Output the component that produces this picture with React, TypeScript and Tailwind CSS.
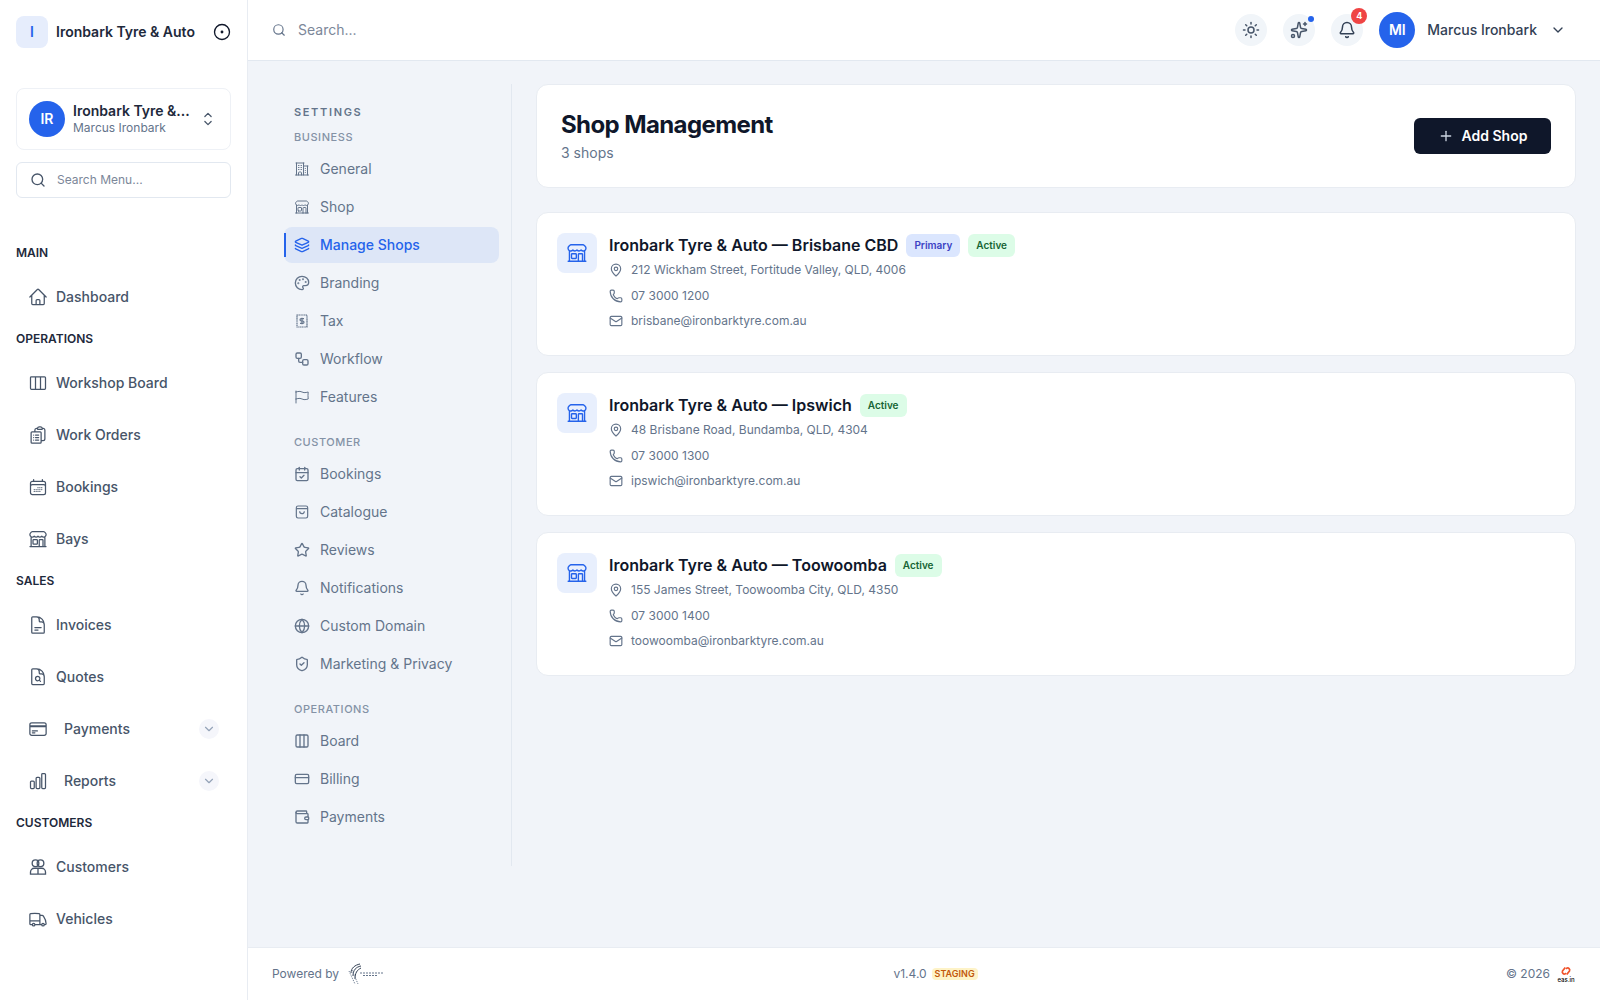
import type { ReactNode } from "react";
import {
  HiOutlineHome,
  HiOutlineViewColumns,
  HiOutlineClipboardDocumentList,
  HiOutlineCalendarDays,
  HiOutlineBuildingStorefront,
  HiOutlineDocumentText,
  HiOutlineDocumentMagnifyingGlass,
  HiOutlineCreditCard,
  HiOutlineChartBar,
  HiOutlineTruck,
  HiOutlineChevronUpDown,
  HiOutlineBuildingOffice2,
  HiOutlineFlag,
} from "react-icons/hi2";
import {
  Bell,
  CalendarCheck,
  ChevronDown,
  CircleDot,
  Columns3,
  CreditCard,
  Globe,
  Layers,
  Mail,
  MapPin,
  Palette,
  Phone,
  Plus,
  Search,
  ShieldCheck,
  Sparkles,
  Star,
  Sun,
  Wallet,
  Workflow,
} from "lucide-react";

const UsersIcon = ({ className }: { className?: string }) => (
  <svg viewBox="0 0 24 24" fill="none" stroke="currentColor" strokeWidth="1.6" className={className}>
    <circle cx="9" cy="7.5" r="4" />
    <circle cx="15" cy="7.5" r="4" />
    <path d="M3 20.5v-2.5a4.5 4.5 0 0 1 4.5-4.5h9a4.5 4.5 0 0 1 4.5 4.5v2.5z" />
    <path d="M12 14v6.5" />
  </svg>
);

const TaxIcon = ({ className }: { className?: string }) => (
  <svg viewBox="0 0 24 24" fill="none" stroke="currentColor" strokeWidth="1.8" className={className}>
    <rect x="4.5" y="3" width="15" height="18" strokeDasharray="2 0.6" />
    <path d="M15 8.5h-4.2a1.7 1.7 0 0 0 0 3.5h2.4a1.7 1.7 0 0 1 0 3.5H9M12 7v10" />
  </svg>
);

const BagIcon = ({ className }: { className?: string }) => (
  <svg viewBox="0 0 24 24" fill="none" stroke="currentColor" strokeWidth="1.8" className={className}>
    <rect x="3.5" y="3" width="17" height="18" rx="2.5" />
    <path d="M3.5 7h17M8.5 11a3.5 3.5 0 0 0 7 0" />
  </svg>
);

const mainNav = [
  {
    label: "MAIN",
    items: [{ name: "Dashboard", Icon: HiOutlineHome }],
  },
  {
    label: "OPERATIONS",
    items: [
      { name: "Workshop Board", Icon: HiOutlineViewColumns },
      { name: "Work Orders", Icon: HiOutlineClipboardDocumentList },
      { name: "Bookings", Icon: HiOutlineCalendarDays },
      { name: "Bays", Icon: HiOutlineBuildingStorefront },
    ],
  },
  {
    label: "SALES",
    items: [
      { name: "Invoices", Icon: HiOutlineDocumentText },
      { name: "Quotes", Icon: HiOutlineDocumentMagnifyingGlass },
      { name: "Payments", Icon: HiOutlineCreditCard, sub: true },
      { name: "Reports", Icon: HiOutlineChartBar, sub: true },
    ],
  },
  {
    label: "CUSTOMERS",
    items: [
      { name: "Customers", Icon: UsersIcon },
      { name: "Vehicles", Icon: HiOutlineTruck },
    ],
  },
];

const settingsNav = [
  {
    label: "BUSINESS",
    items: [
      { name: "General", Icon: HiOutlineBuildingOffice2 },
      { name: "Shop", Icon: HiOutlineBuildingStorefront },
      { name: "Manage Shops", Icon: Layers, active: true },
      { name: "Branding", Icon: Palette },
      { name: "Tax", Icon: TaxIcon },
      { name: "Workflow", Icon: Workflow },
      { name: "Features", Icon: HiOutlineFlag },
    ],
  },
  {
    label: "CUSTOMER",
    items: [
      { name: "Bookings", Icon: CalendarCheck },
      { name: "Catalogue", Icon: BagIcon },
      { name: "Reviews", Icon: Star },
      { name: "Notifications", Icon: Bell },
      { name: "Custom Domain", Icon: Globe },
      { name: "Marketing & Privacy", Icon: ShieldCheck },
    ],
  },
  {
    label: "OPERATIONS",
    items: [
      { name: "Board", Icon: Columns3 },
      { name: "Billing", Icon: CreditCard },
      { name: "Payments", Icon: Wallet },
    ],
  },
];

const shops = [
  {
    name: "Ironbark Tyre & Auto — Brisbane CBD",
    primary: true,
    address: "212 Wickham Street, Fortitude Valley, QLD, 4006",
    phone: "07 3000 1200",
    email: "brisbane@ironbarktyre.com.au",
  },
  {
    name: "Ironbark Tyre & Auto — Ipswich",
    address: "48 Brisbane Road, Bundamba, QLD, 4304",
    phone: "07 3000 1300",
    email: "ipswich@ironbarktyre.com.au",
  },
  {
    name: "Ironbark Tyre & Auto — Toowoomba",
    address: "155 James Street, Toowoomba City, QLD, 4350",
    phone: "07 3000 1400",
    email: "toowoomba@ironbarktyre.com.au",
  },
];

const Sidebar = () => (
  <aside className="w-[248px] shrink-0 h-full overflow-hidden bg-white border-r border-[#e8ecf2]">
    <div className="h-16 pl-4 pr-4 flex items-center">
      <div className="w-8 h-8 rounded-lg bg-[#e6edfc] flex items-center justify-center text-sm font-semibold text-[#2563eb]">
        I
      </div>
      <span className="ml-2 text-sm font-semibold text-[#1e293b] flex-1">Ironbark Tyre & Auto</span>
      <CircleDot className="w-[18px] h-[18px] text-[#0f172a]" strokeWidth={1.8} />
    </div>
    <div className="px-4 pt-6">
      <div className="h-[62px] rounded-lg border border-[#eef1f6] pl-[12px] pr-3 flex items-center">
        <div className="w-9 h-9 rounded-full bg-[#2563eb] text-white text-sm font-semibold flex items-center justify-center shrink-0">
          IR
        </div>
        <div className="ml-2 flex-1 min-w-0">
          <div className="text-sm leading-[18px] font-semibold text-[#1e293b]">Ironbark Tyre &...</div>
          <div className="text-xs leading-4 text-[#64748b]">Marcus Ironbark</div>
        </div>
        <HiOutlineChevronUpDown className="w-5 h-5 text-[#475569] shrink-0" />
      </div>
      <div className="mt-3 h-9 rounded-md border border-[#e2e8f0] pl-[13px] flex items-center">
        <Search className="w-4 h-4 text-[#475569]" />
        <span className="ml-[11px] text-xs text-[#7c8799]">Search Menu...</span>
      </div>
    </div>
    <nav className="px-4 pt-[46px]">
      {mainNav.map((section) => (
        <div key={section.label} className="mb-[11px]">
          <div className="h-[18px] leading-[18px] text-xs font-semibold text-[#1e293b]">{section.label}</div>
          <div className="mt-[13px] flex flex-col gap-[8px]">
            {section.items.map(({ name, Icon, sub }: { name: string; Icon: any; sub?: boolean }) => (
              <div key={name} className="h-11 pl-3 pr-3 flex items-center text-sm font-medium text-[#475569]">
                <Icon className="w-5 h-5 shrink-0" />
                <span className={sub ? "ml-4 flex-1" : "ml-2 flex-1"}>{name}</span>
                {sub && (
                  <span className="w-5 h-5 rounded-full bg-[#f5f6fb] flex items-center justify-center">
                    <ChevronDown className="w-3.5 h-3.5 text-[#94a3b8]" />
                  </span>
                )}
              </div>
            ))}
          </div>
        </div>
      ))}
    </nav>
  </aside>
);

const IconButton = ({ children }: { children: ReactNode }) => (
  <div className="relative w-8 h-8 rounded-full bg-[#f1f5f9] flex items-center justify-center text-[#475569]">
    {children}
  </div>
);

const Header = () => (
  <header className="h-[61px] shrink-0 bg-white border-b border-[#e2e8f0] pl-6 pr-[34px] flex items-center">
    <Search className="w-3.5 h-3.5 text-[#64748b]" />
    <span className="ml-3 text-sm text-[#7c8799] flex-1">Search...</span>
    <div className="flex items-center gap-4">
      <IconButton>
        <Sun className="w-[18px] h-[18px]" />
      </IconButton>
      <IconButton>
        <Sparkles className="w-[18px] h-[18px]" />
        <span className="absolute right-[1px] top-[2px] w-[6px] h-[6px] rounded-full bg-[#2563eb]" />
      </IconButton>
      <IconButton>
        <Bell className="w-[18px] h-[18px] text-[#334155]" />
        <span className="absolute -right-1 -top-1.5 w-4 h-4 rounded-full bg-[#ef4444] text-white text-[9px] font-bold flex items-center justify-center">
          4
        </span>
      </IconButton>
      <div className="w-9 h-9 rounded-full bg-[#2563eb] text-white text-sm font-semibold flex items-center justify-center">
        MI
      </div>
    </div>
    <span className="ml-3 text-sm font-medium text-[#334155]">Marcus Ironbark</span>
    <ChevronDown className="ml-[13px] w-4 h-4 text-[#334155]" />
  </header>
);

const SettingsNav = () => (
  <div className="w-60 shrink-0 h-[782px] border-r border-[#e2e8f0] px-3 pt-5">
    <div className="px-[10px] text-[11px] leading-4 font-semibold tracking-[0.15em] text-[#64748b]">SETTINGS</div>
    {settingsNav.map((group, i) => (
      <div key={group.label} className={i === 0 ? "mt-[9px]" : "mt-[19px]"}>
        <div className="px-[10px] text-[11px] leading-4 font-medium tracking-wider text-[#8492a6]">{group.label}</div>
        <div className="mt-[6px] flex flex-col gap-[2px]">
          {group.items.map(({ name, Icon, active }: { name: string; Icon: any; active?: boolean }) => (
            <div
              key={name}
              className={
                active
                  ? "relative h-9 pl-[10px] flex items-center gap-[10px] rounded-lg bg-[#dde6f7] text-sm font-medium text-[#2563eb]"
                  : "h-9 pl-[10px] flex items-center gap-[10px] rounded-lg text-sm text-[#64748b]"
              }
            >
              {active && <span className="absolute left-0 top-[6px] h-6 w-[2px] bg-[#2563eb]" />}
              <Icon className="w-4 h-4 shrink-0" />
              {name}
            </div>
          ))}
        </div>
      </div>
    ))}
  </div>
);

const ShopCard = ({ shop }: { shop: (typeof shops)[number] }) => (
  <div className="h-36 bg-white rounded-xl border border-[#e8ecf2] px-5 pt-5 flex">
    <div className="w-10 h-10 rounded-lg bg-[#e8effd] flex items-center justify-center shrink-0">
      <HiOutlineBuildingStorefront className="w-[22px] h-[22px] text-[#2563eb]" />
    </div>
    <div className="ml-3">
      <div className="h-6 flex items-center gap-2">
        <span className="text-base font-semibold text-[#0f172a]">{shop.name}</span>
        {shop.primary && (
          <span className="h-[23px] px-2 rounded-md bg-[#dbe6fe] text-[10px] font-semibold text-[#3b42c4] flex items-center">
            Primary
          </span>
        )}
        <span className="h-[23px] px-2 rounded-md bg-[#dcfce7] text-[10px] font-semibold text-[#166534] flex items-center">
          Active
        </span>
      </div>
      <div className="mt-[4px] flex flex-col gap-[7.5px] text-xs leading-[18px] text-[#64748b]">
        <div className="flex items-center gap-2">
          <MapPin className="w-3.5 h-3.5" />
          {shop.address}
        </div>
        <div className="flex items-center gap-2">
          <Phone className="w-3.5 h-3.5" />
          {shop.phone}
        </div>
        <div className="flex items-center gap-2">
          <Mail className="w-3.5 h-3.5" />
          {shop.email}
        </div>
      </div>
    </div>
  </div>
);

const PoweredLogo = () => (
  <svg viewBox="0 0 38 22" className="w-[38px] h-[22px]" fill="none">
    <path d="M4 10c0-5 4-8 9-9M6 13c0-6 3-9 8-10M8 16c0-6 2-9 6-11" stroke="#334155" strokeWidth="1" />
    <path d="M2 8l6 13M5 7l6 14" stroke="#64748b" strokeWidth="1" strokeDasharray="1 1" />
    <path d="M13 10h24M16 12.5h15" stroke="#64748b" strokeWidth="1" strokeDasharray="2 1" />
  </svg>
);

const EasLogo = () => (
  <div className="flex flex-col items-center w-[22px]">
    <svg viewBox="0 0 20 16" className="w-[14px] h-[12px]" fill="none" stroke="#f0532b" strokeWidth="2.4">
      <path d="M9 3 5 8a3 3 0 0 0 4 4l1-1" />
      <path d="M11 13l4-5a3 3 0 0 0-4-4l-1 1" />
    </svg>
    <span className="text-[6px] leading-[6px] font-medium text-black">eas.in</span>
  </div>
);

const App = () => (
  <div className="h-screen w-full overflow-hidden flex bg-[#f1f4f9] font-['Inter',sans-serif]">
    <Sidebar />
    <div className="flex-1 min-w-0 flex flex-col">
      <Header />
      <main className="flex-1 min-h-0 pl-6 pr-6 pt-[23px] flex">
        <SettingsNav />
        <div className="flex-1 min-w-0 pl-6">
          <div className="h-[104px] bg-white rounded-xl border border-[#e8ecf2] px-6 flex items-center justify-between">
            <div>
              <h1 className="text-2xl leading-8 font-bold tracking-tight text-[#0f172a]">Shop Management</h1>
              <p className="mt-[2px] text-sm text-[#64748b]">3 shops</p>
            </div>
            <button className="h-9 w-[137px] rounded-md bg-[#0f172a] text-white text-sm font-semibold flex items-center justify-center gap-2">
              <Plus className="w-4 h-4 text-[#cbd5e1]" />
              Add Shop
            </button>
          </div>
          <div className="mt-6 flex flex-col gap-4">
            {shops.map((shop) => (
              <ShopCard key={shop.name} shop={shop} />
            ))}
          </div>
        </div>
      </main>
      <footer className="h-[53px] shrink-0 bg-white border-t border-[#e8ecf2] pl-6 pr-[23px] flex items-center justify-between text-xs text-[#64748b]">
        <div className="flex items-center gap-2">
          Powered by
          <PoweredLogo />
        </div>
        <div className="flex items-center gap-[5px] -ml-[20px]">
          v1.4.0
          <span className="h-3 px-[3px] rounded-sm bg-[#fef3c7] text-[9px] font-semibold text-[#c2570c] flex items-center">
            STAGING
          </span>
        </div>
        <div className="flex items-center gap-[5px]">
          © 2026
          <EasLogo />
        </div>
      </footer>
    </div>
  </div>
);

export default App;
